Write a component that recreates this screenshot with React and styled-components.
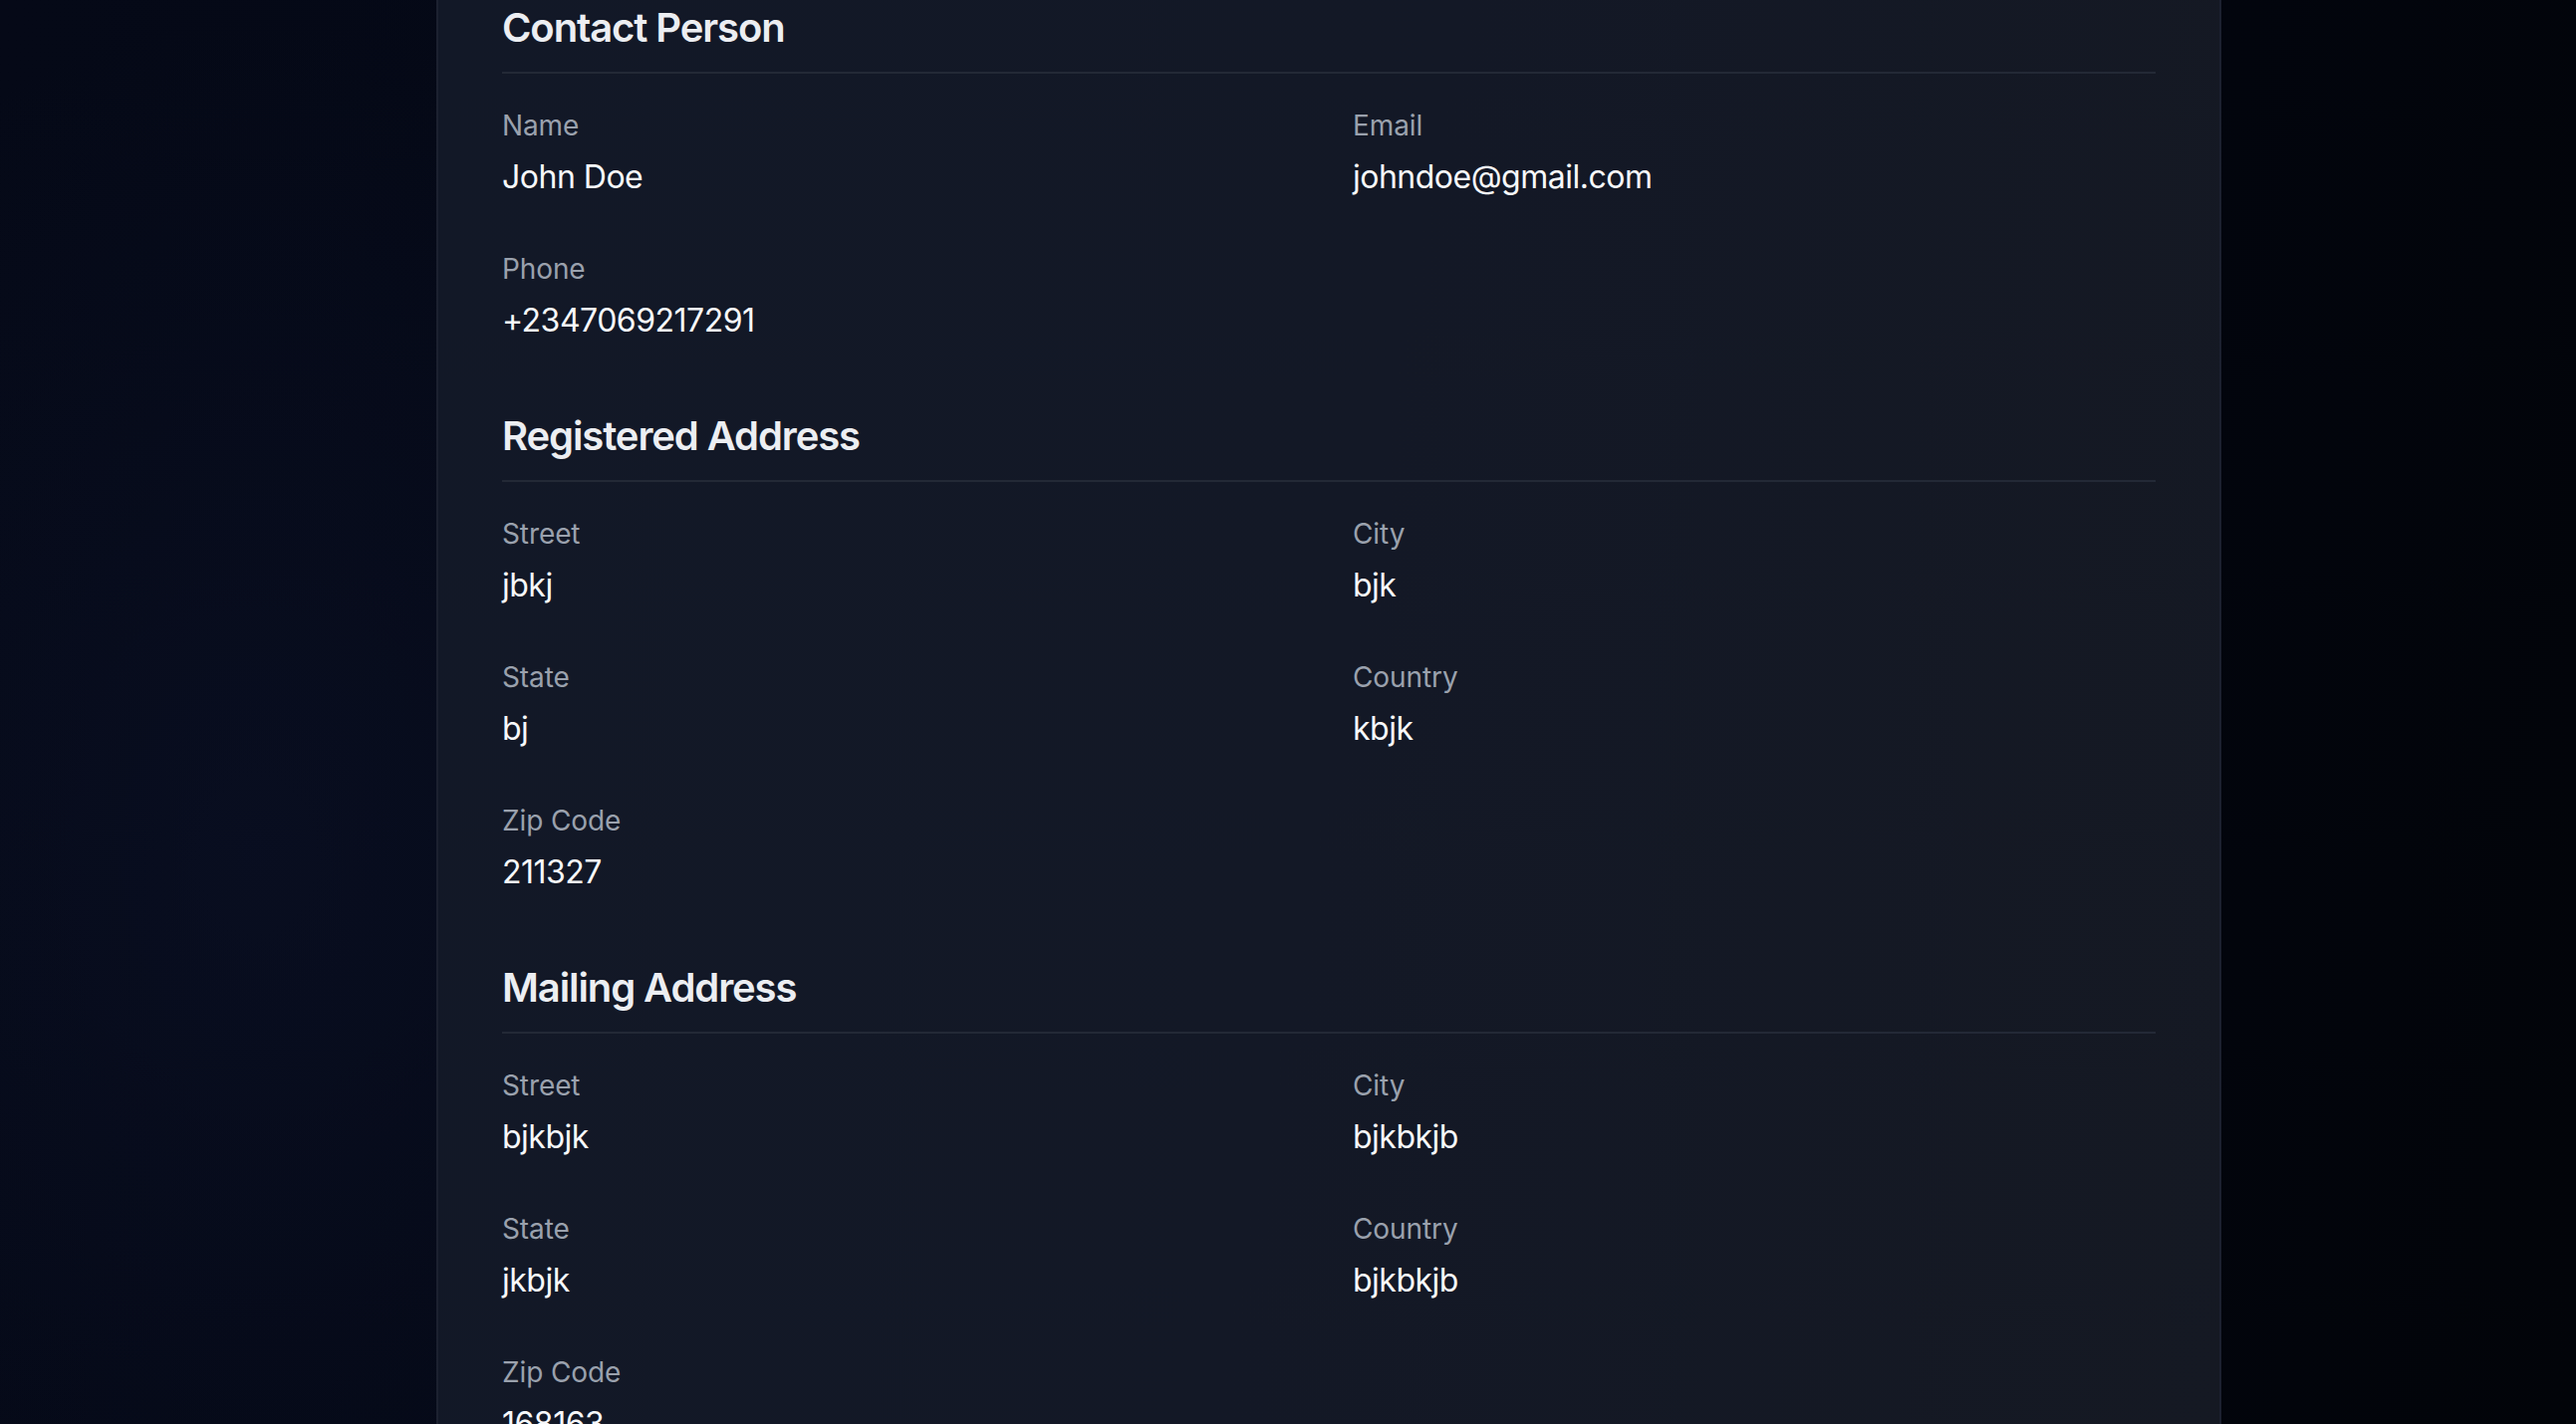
import React from "react";
import styled, { createGlobalStyle } from "styled-components";

const Global = createGlobalStyle`
  html, body { margin: 0; padding: 0; }
  body {
    background: #04070f;
    font-family: Inter, "Noto Sans", "Liberation Sans", sans-serif;
    -webkit-font-smoothing: antialiased;
  }
`;

const Page = styled.div`
  height: 1430px;
  overflow: hidden;
  display: grid;
  grid-template-columns: 438px 1792px 1fr;
  background:
    radial-gradient(ellipse 900px 1200px at 10% 60%, rgba(12, 18, 40, 0.55), transparent 70%),
    linear-gradient(100deg, #050917 0%, #040815 40%, #02050e 75%, #020409 100%);
`;

const Card = styled.main`
  grid-column: 2;
  box-sizing: border-box;
  padding: 0 64px;
  border-left: 2px solid #1c2130;
  border-right: 2px solid #1c2130;
  background: linear-gradient(100deg, #121827 0%, #131826 50%, #151923 100%);
  display: flex;
  flex-direction: column;
  gap: 64px;
`;

const Section = styled.section`
  display: flex;
  flex-direction: column;
`;

const Heading = styled.h2`
  margin: 0 0 32px;
  padding-bottom: 16px;
  border-bottom: 2px solid #232936;
  font-size: 40px;
  line-height: 56px;
  font-weight: 600;
  letter-spacing: -1.1px;
  color: #eceef2;
`;

const Grid = styled.div`
  display: grid;
  grid-template-columns: 1fr 1fr;
  column-gap: 48px;
  row-gap: 48px;
`;

const Field = styled.div`
  display: flex;
  flex-direction: column;
  gap: 8px;
`;

const Label = styled.span`
  font-size: 28px;
  line-height: 40px;
  letter-spacing: -0.1px;
  color: #9aa1ad;
`;

const Value = styled.span`
  font-size: 32px;
  line-height: 48px;
  letter-spacing: -0.5px;
  color: #f7f8fa;
`;

const sections = [
  {
    title: "Contact Person",
    fields: [
      ["Name", "John Doe"],
      ["Email", "johndoe@gmail.com"],
      ["Phone", "+2347069217291"],
    ],
  },
  {
    title: "Registered Address",
    fields: [
      ["Street", "jbkj"],
      ["City", "bjk"],
      ["State", "bj"],
      ["Country", "kbjk"],
      ["Zip Code", "211327"],
    ],
  },
  {
    title: "Mailing Address",
    fields: [
      ["Street", "bjkbjk"],
      ["City", "bjkbkjb"],
      ["State", "jkbjk"],
      ["Country", "bjkbkjb"],
      ["Zip Code", "168163"],
    ],
  },
];

export default function App() {
  return (
    <>
      <Global />
      <Page>
        <Card>
          {sections.map((s) => (
            <Section key={s.title}>
              <Heading>{s.title}</Heading>
              <Grid>
                {s.fields.map(([label, value]) => (
                  <Field key={label}>
                    <Label>{label}</Label>
                    <Value>{value}</Value>
                  </Field>
                ))}
              </Grid>
            </Section>
          ))}
        </Card>
      </Page>
    </>
  );
}
